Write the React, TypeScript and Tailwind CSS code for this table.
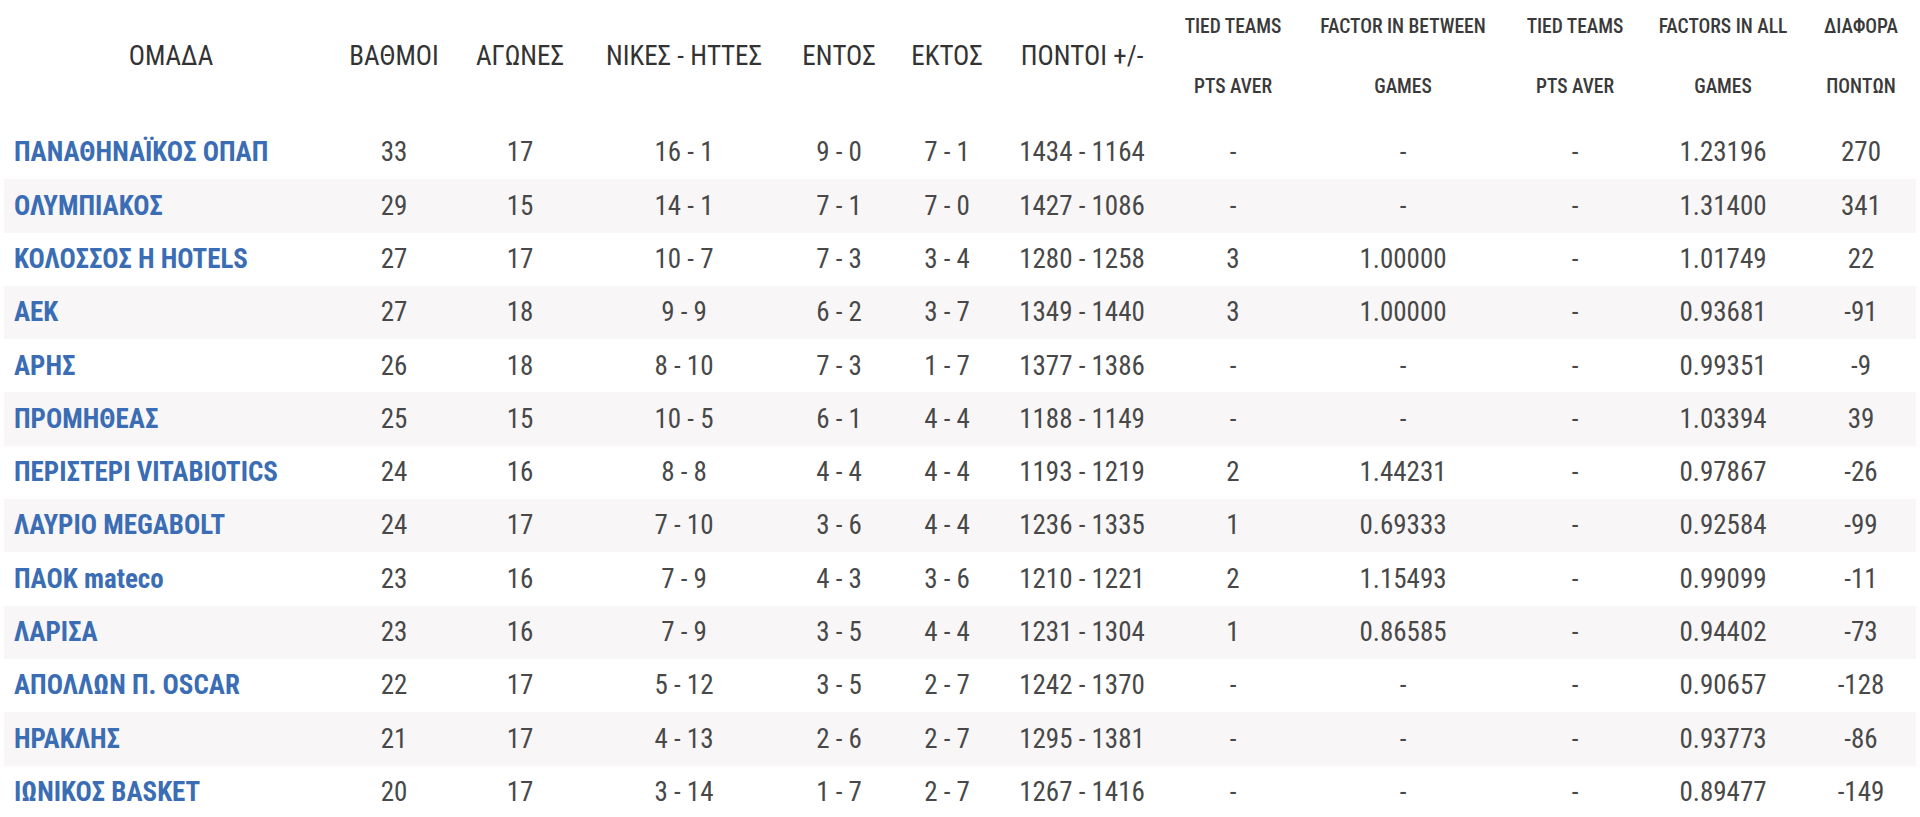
type Row = {
  team: string
  pts: number
  games: number
  wl: string
  home: string
  away: string
  points: string
  tied: string
  between: string
  tied2: string
  all: string
  diff: string
}

const rows: Row[] = [
  { team: 'ΠΑΝΑΘΗΝΑΪΚΟΣ ΟΠΑΠ', pts: 33, games: 17, wl: '16 - 1', home: '9 - 0', away: '7 - 1', points: '1434 - 1164', tied: '-', between: '-', tied2: '-', all: '1.23196', diff: '270' },
  { team: 'ΟΛΥΜΠΙΑΚΟΣ', pts: 29, games: 15, wl: '14 - 1', home: '7 - 1', away: '7 - 0', points: '1427 - 1086', tied: '-', between: '-', tied2: '-', all: '1.31400', diff: '341' },
  { team: 'ΚΟΛΟΣΣΟΣ Η HOTELS', pts: 27, games: 17, wl: '10 - 7', home: '7 - 3', away: '3 - 4', points: '1280 - 1258', tied: '3', between: '1.00000', tied2: '-', all: '1.01749', diff: '22' },
  { team: 'ΑΕΚ', pts: 27, games: 18, wl: '9 - 9', home: '6 - 2', away: '3 - 7', points: '1349 - 1440', tied: '3', between: '1.00000', tied2: '-', all: '0.93681', diff: '-91' },
  { team: 'ΑΡΗΣ', pts: 26, games: 18, wl: '8 - 10', home: '7 - 3', away: '1 - 7', points: '1377 - 1386', tied: '-', between: '-', tied2: '-', all: '0.99351', diff: '-9' },
  { team: 'ΠΡΟΜΗΘΕΑΣ', pts: 25, games: 15, wl: '10 - 5', home: '6 - 1', away: '4 - 4', points: '1188 - 1149', tied: '-', between: '-', tied2: '-', all: '1.03394', diff: '39' },
  { team: 'ΠΕΡΙΣΤΕΡΙ VITABIOTICS', pts: 24, games: 16, wl: '8 - 8', home: '4 - 4', away: '4 - 4', points: '1193 - 1219', tied: '2', between: '1.44231', tied2: '-', all: '0.97867', diff: '-26' },
  { team: 'ΛΑΥΡΙΟ MEGABOLT', pts: 24, games: 17, wl: '7 - 10', home: '3 - 6', away: '4 - 4', points: '1236 - 1335', tied: '1', between: '0.69333', tied2: '-', all: '0.92584', diff: '-99' },
  { team: 'ΠΑΟΚ mateco', pts: 23, games: 16, wl: '7 - 9', home: '4 - 3', away: '3 - 6', points: '1210 - 1221', tied: '2', between: '1.15493', tied2: '-', all: '0.99099', diff: '-11' },
  { team: 'ΛΑΡΙΣΑ', pts: 23, games: 16, wl: '7 - 9', home: '3 - 5', away: '4 - 4', points: '1231 - 1304', tied: '1', between: '0.86585', tied2: '-', all: '0.94402', diff: '-73' },
  { team: 'ΑΠΟΛΛΩΝ Π. OSCAR', pts: 22, games: 17, wl: '5 - 12', home: '3 - 5', away: '2 - 7', points: '1242 - 1370', tied: '-', between: '-', tied2: '-', all: '0.90657', diff: '-128' },
  { team: 'ΗΡΑΚΛΗΣ', pts: 21, games: 17, wl: '4 - 13', home: '2 - 6', away: '2 - 7', points: '1295 - 1381', tied: '-', between: '-', tied2: '-', all: '0.93773', diff: '-86' },
  { team: 'ΙΩΝΙΚΟΣ BASKET', pts: 20, games: 17, wl: '3 - 14', home: '1 - 7', away: '2 - 7', points: '1267 - 1416', tied: '-', between: '-', tied2: '-', all: '0.89477', diff: '-149' },
]

function TwoLine({ top, bottom }: { top: string; bottom: string }) {
  return (
    <div className="flex flex-col items-center gap-[37px] text-[19.5px] font-medium leading-[23px] text-[#3a3a3a]">
      <span className="whitespace-nowrap">{top}</span>
      <span className="whitespace-nowrap">{bottom}</span>
    </div>
  )
}

export default function App() {
  const font = { fontFamily: '"Roboto Condensed", "Liberation Sans Narrow", "Arial Narrow", "DejaVu Sans Condensed", Roboto, sans-serif' }
  return (
    <div className="w-[1920px] h-[817px] overflow-hidden bg-white px-[4px]" style={font}>
      <table className="w-[1912px] table-fixed border-collapse">
        <colgroup>
          <col className="w-[334px]" />
          <col className="w-[112px]" />
          <col className="w-[140px]" />
          <col className="w-[188px]" />
          <col className="w-[122px]" />
          <col className="w-[94px]" />
          <col className="w-[176px]" />
          <col className="w-[126px]" />
          <col className="w-[214px]" />
          <col className="w-[130px]" />
          <col className="w-[166px]" />
          <col className="w-[110px]" />
        </colgroup>
        <thead>
          <tr className="h-[126px] text-[27px] text-[#333]">
            <th className="pb-[14px] font-normal">ΟΜΑΔΑ</th>
            <th className="pb-[14px] font-normal">ΒΑΘΜΟΙ</th>
            <th className="pb-[14px] font-normal">ΑΓΩΝΕΣ</th>
            <th className="pb-[14px] font-normal whitespace-nowrap">ΝΙΚΕΣ - ΗΤΤΕΣ</th>
            <th className="pb-[14px] font-normal">ΕΝΤΟΣ</th>
            <th className="pb-[14px] font-normal">ΕΚΤΟΣ</th>
            <th className="pb-[14px] font-normal whitespace-nowrap">ΠΟΝΤΟΙ +/-</th>
            <th className="pb-[14px]"><TwoLine top="TIED TEAMS" bottom="PTS AVER" /></th>
            <th className="pb-[14px]"><TwoLine top="FACTOR IN BETWEEN" bottom="GAMES" /></th>
            <th className="pb-[14px]"><TwoLine top="TIED TEAMS" bottom="PTS AVER" /></th>
            <th className="pb-[14px]"><TwoLine top="FACTORS IN ALL" bottom="GAMES" /></th>
            <th className="pb-[14px]"><TwoLine top="ΔΙΑΦΟΡΑ" bottom="ΠΟΝΤΩΝ" /></th>
          </tr>
        </thead>
        <tbody>
          {rows.map((r, i) => (
            <tr key={r.team} className={`h-[53.3px] text-[27px] font-normal text-[#484848] ${i % 2 === 1 ? 'bg-[#f8f6f7]' : ''}`}>
              <td className="pl-[10px] text-left font-bold text-[#3b6db4] whitespace-nowrap">{r.team}</td>
              <td className="text-center">{r.pts}</td>
              <td className="text-center">{r.games}</td>
              <td className="text-center whitespace-nowrap">{r.wl}</td>
              <td className="text-center whitespace-nowrap">{r.home}</td>
              <td className="text-center whitespace-nowrap">{r.away}</td>
              <td className="text-center whitespace-nowrap">{r.points}</td>
              <td className="text-center">{r.tied}</td>
              <td className="text-center">{r.between}</td>
              <td className="text-center">{r.tied2}</td>
              <td className="text-center">{r.all}</td>
              <td className="text-center">{r.diff}</td>
            </tr>
          ))}
        </tbody>
      </table>
    </div>
  )
}
